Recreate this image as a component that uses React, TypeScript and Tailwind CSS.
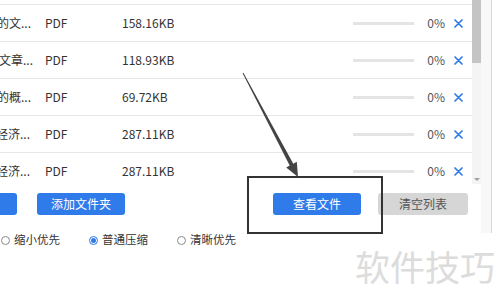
import React from 'react'

const font = { fontFamily: '"Noto Sans CJK SC", "Noto Sans", sans-serif' }

const rows = [
  { name: '的文...', size: '158.16KB', off: '-ml-[3px]' },
  { name: '文章...', size: '118.93KB', off: '-ml-[1px]' },
  { name: '的概...', size: '69.72KB', off: '-ml-[3px]' },
  { name: '经济...', size: '287.11KB', off: '-ml-[4px]' },
  { name: '经济...', size: '287.11KB', off: '-ml-[4px]' },
]

function Cross() {
  return (
    <svg width="9" height="9" viewBox="0 0 9 9" className="shrink-0">
      <path d="M1 1 L8 8 M8 1 L1 8" stroke="#2f7bea" strokeWidth="1.7" strokeLinecap="round" />
    </svg>
  )
}

function Radio({ checked, label }: { checked?: boolean; label: string }) {
  return (
    <div className="flex w-[88px] items-center gap-[4px]">
      <span
        className={`flex h-[9px] w-[9px] items-center justify-center rounded-full border ${
          checked ? 'border-[#2f7bea]' : 'border-[#8a8a8a]'
        } bg-white`}
      >
        {checked && <span className="h-[5px] w-[5px] rounded-full bg-[#2f7bea]" />}
      </span>
      <span className="text-[11.5px] leading-none text-[#333]">{label}</span>
    </div>
  )
}

export default function App() {
  return (
    <div className="relative h-[308px] w-[500px] overflow-hidden bg-white" style={font}>
      <div className="flex">
        <div className="w-[481px]">
          {/* 文件列表 */}
          <div className="flex h-[184px]">
            <div className="h-[184px] w-[472px] overflow-hidden">
              <div className="h-[5px] border-b border-[#e6e6e6]" />
              {rows.map((r, i) => (
                <div key={i} className="flex h-[37px] items-center border-b border-[#e6e6e6] text-[12px] text-[#333]">
                  <div className="w-[45px] overflow-hidden whitespace-nowrap">
                    <span className={`block ${r.off}`}>{r.name}</span>
                  </div>
                  <div className="w-[77px]">PDF</div>
                  <div className="flex-1">{r.size}</div>
                  <div className="h-[3px] w-[61px] bg-[#e4e4e4]" />
                  <div className="w-[31px] text-right text-[#555]">0%</div>
                  <div className="ml-[9px] flex w-[18px]">
                    <Cross />
                  </div>
                </div>
              ))}
            </div>
            {/* 滚动条 */}
            <div className="flex w-[9px] flex-col bg-[#f4f4f4]">
              <div className="h-[63px] bg-[#c4c4c4]" />
              <div className="flex-1" />
              <div className="flex h-[10px] items-center justify-center">
                <span className="h-0 w-0 border-x-[3px] border-t-[3px] border-x-transparent border-t-[#a0a0a0]" />
              </div>
            </div>
          </div>

          {/* 按钮 */}
          <div className="mt-[9px] flex h-[22px] text-[12px] text-white">
            <div className="w-[17px] rounded-r-[3px] bg-[#2f7bea]" />
            <div className="ml-[20px] flex w-[88px] items-center justify-center rounded-[3px] bg-[#2f7bea]">添加文件夹</div>
            <div className="ml-[148px] flex w-[88px] items-center justify-center rounded-[3px] bg-[#2f7bea]">查看文件</div>
            <div className="ml-[17px] flex w-[90px] items-center justify-center rounded-[3px] bg-[#d6d6d6] text-[#555]">
              清空列表
            </div>
          </div>

          {/* 压缩选项 */}
          <div className="mt-[18px] flex h-[14px] items-center pl-[1px]">
            <Radio label="缩小优先" />
            <Radio checked label="普通压缩" />
            <Radio label="清晰优先" />
          </div>
        </div>
        <div className="h-[233px] w-[11px] border-r border-[#d8d8d8] bg-[#f8f8f8]" />
      </div>

      {/* 水印 */}
      <div className="mt-[1px] flex justify-end pr-[5px]">
        <span className="text-[35px] leading-none text-[#dcdcdc]">软件技巧</span>
      </div>

      {/* 标注 */}
      <div className="pointer-events-none absolute left-[247px] top-[176px] h-[58px] w-[136px] border-2 border-[#333]" />
      <svg className="pointer-events-none absolute left-0 top-0" width="500" height="308">
        <polygon
          points="243.4,72.8 293.3,163.7 296.8,161.8 298,177 286.2,167.4 289.7,165.5 242.6,73.2"
          fill="#444"
        />
      </svg>
    </div>
  )
}
